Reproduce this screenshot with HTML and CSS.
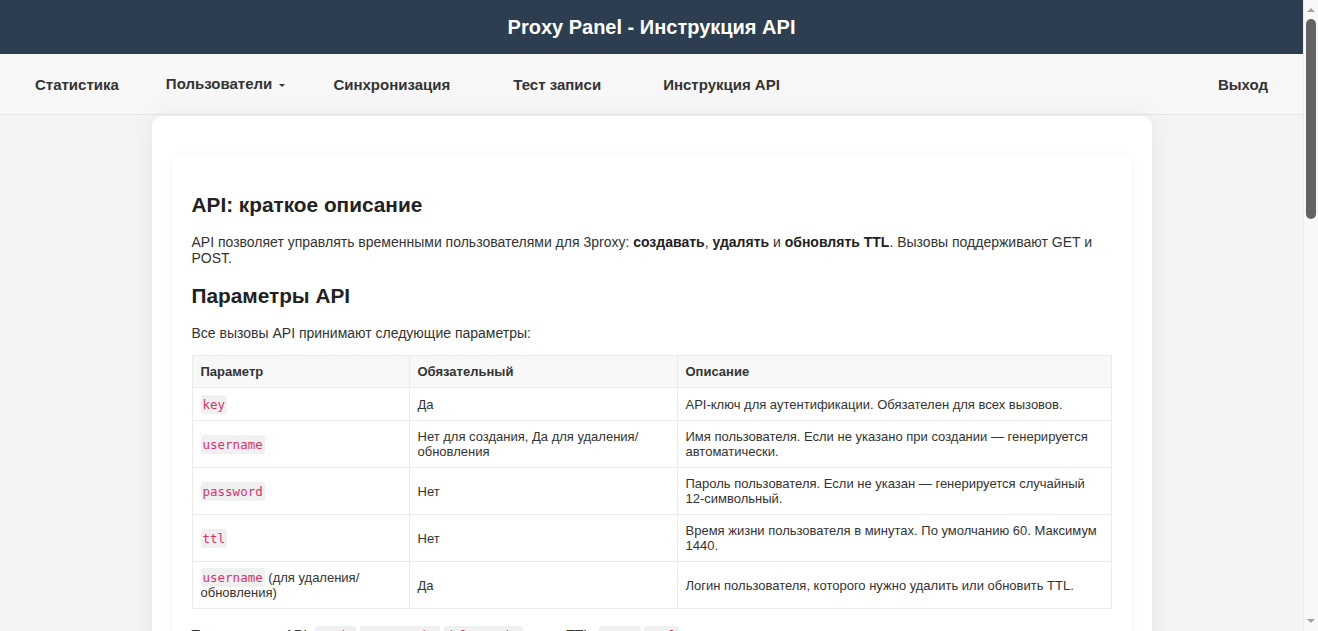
FILE: index.html
```html
<!DOCTYPE html>
<html lang="ru">
<head>
<meta charset="utf-8">
<title>Proxy Panel - Инструкция API</title>
<link rel="stylesheet" href="styles.css">
</head>
<body>
<div class="page">
<header class="topbar">Proxy Panel - Инструкция API</header>
<nav class="nav">
  <a class="nav-item nav-first" href="#">Статистика</a>
  <a class="nav-item nav-drop" href="#">Пользователи <span class="caret"></span></a>
  <a class="nav-item nav-sync" href="#">Синхронизация</a>
  <a class="nav-item nav-test" href="#">Тест записи</a>
  <a class="nav-item nav-api" href="#">Инструкция API</a>
  <a class="nav-item nav-exit" href="#">Выход</a>
</nav>
<main class="container">
  <section class="card">
    <h2>API: краткое описание</h2>
    <p>API позволяет управлять временными пользователями для 3proxy: <b>создавать</b>, <b>удалять</b> и <b>обновлять TTL</b>. Вызовы поддерживают GET и POST.</p>
    <h2>Параметры API</h2>
    <p>Все вызовы API принимают следующие параметры:</p>
    <table class="params">
      <thead>
        <tr><th class="c1">Параметр</th><th class="c2">Обязательный</th><th>Описание</th></tr>
      </thead>
      <tbody>
        <tr><td><code>key</code></td><td>Да</td><td>API-ключ для аутентификации. Обязателен для всех вызовов.</td></tr>
        <tr><td><code>username</code></td><td>Нет для создания, Да для удаления/ обновления</td><td>Имя пользователя. Если не указано при создании — генерируется автоматически.</td></tr>
        <tr><td><code>password</code></td><td>Нет</td><td>Пароль пользователя. Если не указан — генерируется случайный 12-символьный.</td></tr>
        <tr><td><code>ttl</code></td><td>Нет</td><td>Время жизни пользователя в минутах. По умолчанию 60. Максимум 1440.</td></tr>
        <tr><td><code>username</code> (для удаления/ обновления)</td><td>Да</td><td>Логин пользователя, которого нужно удалить или обновить TTL.</td></tr>
      </tbody>
    </table>
    <p class="endpoints">Точки входа в API: <code>/api/</code> <code>create.php</code> <code>delete.php</code> и для TTL: <code>renew</code> <code>/ttl</code></p>
    <h2>Создание пользователя</h2>
    <pre class="example">GET /api/create.php?key=ВАШ_КЛЮЧ&amp;username=user1&amp;password=pass123&amp;ttl=60</pre>
    <p>Ответ содержит логин, пароль и время истечения учётной записи.</p>
    <pre class="example">{"status": "ok", "username": "user1", "password": "pass123", "expires": "2024-01-01 12:00:00"}</pre>
    <h2>Удаление пользователя</h2>
    <pre class="example">GET /api/delete.php?key=ВАШ_КЛЮЧ&amp;username=user1</pre>
    <p>Пользователь удаляется из конфигурации 3proxy немедленно.</p>
    <h2>Обновление TTL</h2>
    <pre class="example">GET /api/renew/ttl?key=ВАШ_КЛЮЧ&amp;username=user1&amp;ttl=120</pre>
    <p>TTL отсчитывается заново с момента вызова.</p>
    <h2>Коды ошибок</h2>
    <p>При ошибке возвращается JSON с полем <code>error</code> и HTTP-кодом 400, 403 или 404.</p>
    <pre class="example">{"status": "error", "error": "invalid key"}</pre>
    <h2>Примеры с curl</h2>
    <pre class="example">curl -X POST -d "key=ВАШ_КЛЮЧ&amp;ttl=30" http://server/api/create.php</pre>
    <pre class="example">curl -X POST -d "key=ВАШ_КЛЮЧ&amp;username=user1" http://server/api/delete.php</pre>
    <pre class="example">curl -X POST -d "key=ВАШ_КЛЮЧ&amp;username=user1&amp;ttl=90" http://server/api/renew/ttl</pre>
  </section>
</main>
</div>
<div class="scrollbar" aria-hidden="true">
  <span class="sb-arrow sb-up"></span>
  <span class="sb-thumb"></span>
  <span class="sb-arrow sb-down"></span>
</div>
</body>
</html>
```

FILE: styles.css
```css
html, body {
  margin: 0;
  padding: 0;
}
body {
  background: #f3f4f6;
  font-family: "Liberation Sans", Arial, sans-serif;
  color: #333;
}
.page {
  margin-right: 15px;
}
.topbar {
  background: #2c3e50;
  color: #fff;
  height: 54px;
  display: flex;
  align-items: center;
  justify-content: center;
  font-size: 20px;
  font-weight: bold;
}
.nav {
  background: #f7f7f7;
  border-bottom: 1px solid #e6e6e6;
  height: 59px;
  box-sizing: content-box;
  display: flex;
  align-items: center;
  padding: 1px 35px 0;
}
.nav-item {
  color: #333;
  text-decoration: none;
  font-size: 15px;
  font-weight: bold;
  white-space: nowrap;
}
.nav-drop { margin-left: 47px; position: relative; top: -1px; }
.nav-sync { margin-left: 48px; }
.nav-test { margin-left: 63px; }
.nav-api { margin-left: 62px; }
.nav-exit { margin-left: auto; }
.caret {
  display: inline-block;
  width: 0;
  height: 0;
  border-left: 3px solid transparent;
  border-right: 3px solid transparent;
  border-top: 3px solid #333;
  vertical-align: middle;
  margin-left: 3px;
}
.container {
  max-width: 1000px;
  margin: 1px auto 0;
  background: #fff;
  border-radius: 10px;
  box-shadow: 0 0 24px rgba(0, 0, 0, 0.06);
  padding: 39px 20px 20px;
  box-sizing: border-box;
}
.card {
  background: #fff;
  border-radius: 8px;
  box-shadow: 0 1px 8px rgba(0, 0, 0, 0.05);
  padding: 20px;
}
.card h2 {
  font-size: 20.8px;
  line-height: 23px;
  color: #222;
  margin: 18px 0;
}
.card p {
  font-size: 14px;
  line-height: 16px;
  margin: 14px 0;
}
.card b { color: #222; }
code {
  font-family: "DejaVu Sans Mono", monospace;
  font-size: 12.5px;
  color: #d6336c;
  background: #f0f0f0;
  padding: 2px 2px;
  border-radius: 3px;
}
.params {
  width: 100%;
  border-collapse: collapse;
  font-size: 13px;
  line-height: 15px;
  margin: 0 0 14px;
}
.params th, .params td {
  border: 1px solid #ebebeb;
  padding: 8px;
  text-align: left;
  vertical-align: middle;
}
.params th {
  background: #f8f8f8;
  font-weight: bold;
}
.params th.c1 { width: 200px; }
.params th.c2 { width: 251px; }
.params td { height: 16px; }
.card .endpoints { margin-top: 18px; }
.example {
  background: #f5f5f5;
  border-radius: 6px;
  padding: 12px;
  font-family: "DejaVu Sans Mono", monospace;
  font-size: 13px;
  overflow: auto;
}
.scrollbar {
  position: fixed;
  top: 0;
  right: 0;
  width: 15px;
  height: 100vh;
  background: #f8f8f8;
  border-left: 1px solid #ececec;
  box-sizing: border-box;
}
.sb-arrow {
  position: absolute;
  left: 3px;
  width: 0;
  height: 0;
  border-left: 4px solid transparent;
  border-right: 4px solid transparent;
}
.sb-up {
  top: 8px;
  border-bottom: 4px solid #a3a3a3;
}
.sb-down {
  bottom: 8px;
  border-top: 4px solid #a3a3a3;
}
.sb-thumb {
  position: absolute;
  top: 19px;
  left: 2px;
  width: 10px;
  height: 200px;
  background: #636363;
  border-radius: 5px;
}
```
